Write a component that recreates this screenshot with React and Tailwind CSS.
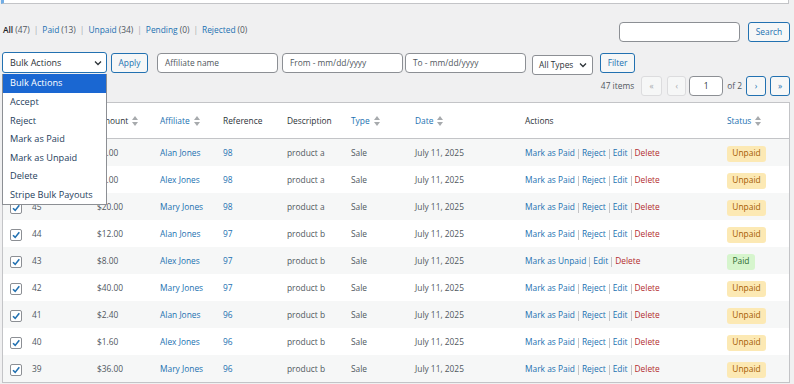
import React from 'react';

const ROWS = [
  { id: 47, amount: '$4.00', affiliate: 'Alan Jones', ref: 98, desc: 'product a', status: 'Unpaid' },
  { id: 46, amount: '$8.00', affiliate: 'Alex Jones', ref: 98, desc: 'product a', status: 'Unpaid' },
  { id: 45, amount: '$20.00', affiliate: 'Mary Jones', ref: 98, desc: 'product a', status: 'Unpaid' },
  { id: 44, amount: '$12.00', affiliate: 'Alan Jones', ref: 97, desc: 'product b', status: 'Unpaid' },
  { id: 43, amount: '$8.00', affiliate: 'Alex Jones', ref: 97, desc: 'product b', status: 'Paid' },
  { id: 42, amount: '$40.00', affiliate: 'Mary Jones', ref: 97, desc: 'product b', status: 'Unpaid' },
  { id: 41, amount: '$2.40', affiliate: 'Alan Jones', ref: 96, desc: 'product b', status: 'Unpaid' },
  { id: 40, amount: '$1.60', affiliate: 'Alex Jones', ref: 96, desc: 'product b', status: 'Unpaid' },
  { id: 39, amount: '$36.00', affiliate: 'Mary Jones', ref: 96, desc: 'product b', status: 'Unpaid' },
];

const BULK = ['Bulk Actions', 'Accept', 'Reject', 'Mark as Paid', 'Mark as Unpaid', 'Delete', 'Stripe Bulk Payouts'];

const COLS = 'grid-cols-[29px_65px_63px_63px_64px_64px_64px_110px_202px_1fr]';

function SortArrows() {
  return (
    <svg width="6" height="10" viewBox="0 0 6 10" className="ml-[4px] inline-block">
      <path d="M3 0 L6 4 L0 4 Z" fill="#a7aaad" />
      <path d="M0 6 L6 6 L3 10 Z" fill="#a7aaad" />
    </svg>
  );
}

function Chevron() {
  return (
    <svg width="8" height="6" viewBox="0 0 8 6">
      <path d="M1 1.5 L4 4.5 L7 1.5" fill="none" stroke="#2c3338" strokeWidth="1.3" />
    </svg>
  );
}

function Check() {
  return (
    <div className="w-[12px] h-[12px] rounded-[2px] border border-[#8c8f94] bg-white flex items-center justify-center">
      <svg width="10" height="10" viewBox="0 0 10 10">
        <path d="M2 5.2 L4.2 7.4 L8.3 2.3" fill="none" stroke="#2271b1" strokeWidth="1.6" />
      </svg>
    </div>
  );
}

function Bar() {
  return <span className="inline-block w-[1px] h-[10px] bg-[#c3c4c7] mx-[3px] align-middle" />;
}

function Sep() {
  return <span className="text-[#a7aaad] mx-[4px]">|</span>;
}

function Btn({ children, className = '' }) {
  return (
    <div className={`h-[20px] flex items-center justify-center border border-[#2271b1] rounded-[3px] bg-[#f6f7f7] text-[#2271b1] ${className}`}>
      {children}
    </div>
  );
}

function Field({ text, className = '' }) {
  return (
    <div className={`h-[20px] flex items-center px-[7px] border border-[#8c8f94] rounded-[4px] bg-white text-[#50575e] ${className}`}>
      {text}
    </div>
  );
}

export default function App() {
  return (
    <div className="w-[794px] h-[384px] overflow-hidden bg-[#f0f0f1] relative text-[8.4px] text-[#3c434a]" style={{ fontFamily: '"Open Sans", "Noto Sans", sans-serif' }}>
      {/* notice box clipped at top */}
      <div className="h-[4px] ml-[1px] mr-[5px] bg-white border border-t-0 border-[#c3c4c7] border-l-[3px] border-l-[#72aee6]" />

      {/* status links + search */}
      <div className="flex items-start justify-between pl-[3px] pr-[4px] mt-[18px]">
        <div className="pt-[2px] leading-[12px] flex items-center">
          <span className="text-[#1d2327] font-semibold">All</span>
          <span className="text-[#50575e] ml-[2px]">(47)</span>
          <Sep />
          <span className="text-[#2271b1]">Paid</span>
          <span className="text-[#50575e] ml-[2px]">(13)</span>
          <Sep />
          <span className="text-[#2271b1]">Unpaid</span>
          <span className="text-[#50575e] ml-[2px]">(34)</span>
          <Sep />
          <span className="text-[#2271b1]">Pending</span>
          <span className="text-[#50575e] ml-[2px]">(0)</span>
          <Sep />
          <span className="text-[#2271b1]">Rejected</span>
          <span className="text-[#50575e] ml-[2px]">(0)</span>
        </div>
        <div className="flex items-center">
          <div className="w-[121px] h-[20px] border border-[#8c8f94] rounded-[4px] bg-white" />
          <Btn className="w-[42px] ml-[8px]">Search</Btn>
        </div>
      </div>

      {/* filter row */}
      <div className="flex items-start pl-[2px] mt-[10px] h-[24px]">
        <div className="w-[105px] h-[21px] flex items-center justify-between pl-[7px] pr-[4px] border border-[#2271b1] rounded-[3px] bg-white text-[#2c3338] text-[9px]">
          <span>Bulk Actions</span>
          <Chevron />
        </div>
        <Btn className="w-[37px] ml-[4px] mt-[1px]">Apply</Btn>
        <Field text="Affiliate name" className="w-[121px] ml-[9px] mt-[1px]" />
        <Field text="From - mm/dd/yyyy" className="w-[121px] ml-[4px] mt-[1px]" />
        <Field text="To - mm/dd/yyyy" className="w-[121px] ml-[2px] mt-[1px]" />
        <div className="w-[61px] h-[20px] ml-[6px] mt-[3px] flex items-center justify-between pl-[6px] pr-[5px] border border-[#8c8f94] rounded-[3px] bg-white text-[#2c3338]">
          <span>All Types</span>
          <Chevron />
        </div>
        <Btn className="w-[35px] ml-[7px] mt-[1px]">Filter</Btn>
      </div>

      {/* pagination */}
      <div className="flex items-center justify-end pr-[4px] h-[20px]">
        <span className="text-[#50575e] mr-[7px]">47 items</span>
        <div className="w-[21px] h-[20px] flex items-center justify-center border border-[#dcdcde] rounded-[3px] bg-[#f6f7f7] text-[#a7aaad]">«</div>
        <div className="w-[19px] h-[20px] ml-[5px] flex items-center justify-center border border-[#dcdcde] rounded-[3px] bg-[#f6f7f7] text-[#a7aaad]">‹</div>
        <div className="w-[34px] h-[20px] ml-[3px] flex items-center justify-center border border-[#8c8f94] rounded-[4px] bg-white text-[#2c3338]">1</div>
        <span className="ml-[4px] text-[#50575e]">of 2</span>
        <Btn className="w-[20px] ml-[4px]">›</Btn>
        <Btn className="w-[20px] ml-[4px]">»</Btn>
      </div>

      {/* table */}
      <div className="ml-[2px] mt-[6px] w-[788px] border border-[#c3c4c7] bg-white">
        <div className={`grid ${COLS} h-[36px] pt-[2px] items-center border-b border-[#c3c4c7] text-[#2c3338]`}>
          <div className="pl-[7px]"><Check /></div>
          <div className="text-[#2271b1]">ID<SortArrows /></div>
          <div className="flex items-center">Amount<SortArrows /></div>
          <div className="flex items-center text-[#2271b1]">Affiliate<SortArrows /></div>
          <div>Reference</div>
          <div>Description</div>
          <div className="flex items-center text-[#2271b1]">Type<SortArrows /></div>
          <div className="flex items-center text-[#2271b1]">Date<SortArrows /></div>
          <div>Actions</div>
          <div className="flex items-center text-[#2271b1]">Status<SortArrows /></div>
        </div>
        {ROWS.map((r, i) => (
          <div key={r.id} className={`grid ${COLS} h-[27px] pt-[2px] items-center ${i % 2 === 0 ? 'bg-[#f6f7f7]' : 'bg-white'}`}>
            <div className="pl-[7px]"><Check /></div>
            <div className="text-[#50575e]">{r.id}</div>
            <div className="text-[#50575e]">{r.amount}</div>
            <div className="text-[#2271b1]">{r.affiliate}</div>
            <div className="text-[#2271b1]">{r.ref}</div>
            <div className="text-[#50575e]">{r.desc}</div>
            <div className="text-[#50575e]">Sale</div>
            <div className="text-[#50575e]">July 11, 2025</div>
            <div className="text-[#2271b1]">
              {r.status === 'Paid' ? (
                <>Mark as Unpaid<Bar />Edit<Bar /><span className="text-[#b32d2e]">Delete</span></>
              ) : (
                <>Mark as Paid<Bar />Reject<Bar />Edit<Bar /><span className="text-[#b32d2e]">Delete</span></>
              )}
            </div>
            <div>
              {r.status === 'Paid' ? (
                <span className="inline-flex items-center justify-center h-[16px] w-[28px] rounded-[3px] bg-[#d6f5cd] text-[#2d6a31]">Paid</span>
              ) : (
                <span className="inline-flex items-center justify-center h-[16px] w-[39px] rounded-[3px] bg-[#fce9b4] text-[#a55c00]">Unpaid</span>
              )}
            </div>
          </div>
        ))}
      </div>

      {/* open bulk actions dropdown */}
      <div className="absolute left-[2px] top-[74px] w-[105px] h-[131px] bg-white border border-[#8c8f94] border-t-0 text-[9.2px] text-[#263e5c]">
        {BULK.map((b, i) => (
          <div key={b} className={`h-[18.6px] flex items-center pl-[7px] ${i === 0 ? 'bg-[#1a67d2] text-white' : ''}`}>{b}</div>
        ))}
      </div>
    </div>
  );
}
